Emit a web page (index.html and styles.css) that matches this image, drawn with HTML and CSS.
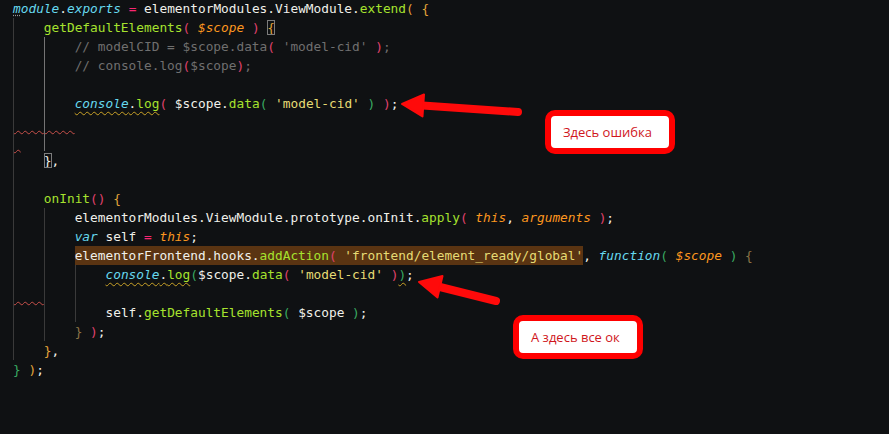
FILE: index.html
```html
<!DOCTYPE html>
<html lang="ru">

<head>
  <meta charset="UTF-8" />
  <title>elementor view module</title>
  <link rel="stylesheet" href="styles.css">
</head>

<body>

  <!-- редактор -->
  <div class="editor">
    <div class="ln"><span class="k"><span class="dots">m</span>odule</span>.<span class="k">exports</span> <span class="o">=</span> elementorModules.ViewModule.<span class="f">extend</span><span class="b1">(</span> <span class="b1">{</span></div>
    <div class="ln"><span class="ind">    </span><span class="f">getDefaultElements</span><span class="b2">(</span> <span class="p">$scope</span> <span class="b2">)</span> <span class="b1 match">{</span></div>
    <div class="ln"><span class="ind">    </span><span class="ind active">    </span><span class="c">// modelCID = $scope.data<span class="b2">(</span> 'model-cid' <span class="b2">)</span>;</span></div>
    <div class="ln"><span class="ind">    </span><span class="ind active">    </span><span class="c">// console.log<span class="b2">(</span>$scope<span class="b2">)</span>;</span></div>
    <div class="ln"><span class="ind">    </span><span class="ind active">    </span></div>
    <div class="ln"><span class="ind">    </span><span class="ind active">    </span><span class="warn"><span class="k">console</span>.<span class="f">log</span></span><span class="b2">(</span> $scope.<span class="f">data</span><span class="b3">(</span> <span class="s">'model-cid'</span> <span class="b3">)</span> <span class="b2">)</span>;</div>
    <div class="ln"><span class="ind err">    </span><span class="ind active err">    </span></div>
    <div class="ln"><span class="ind"><span class="err"> </span>   </span><span class="ind active">    </span></div>
    <div class="ln"><span class="ind">    </span><span class="match">}</span>,</div>
    <div class="ln"><span class="ind">    </span></div>
    <div class="ln"><span class="ind">    </span><span class="f">onInit</span><span class="b2">()</span> <span class="b1">{</span></div>
    <div class="ln"><span class="ind">    </span><span class="ind">    </span>elementorModules.ViewModule.prototype.onInit.<span class="f">apply</span><span class="b2">(</span> <span class="p">this</span>, <span class="p">arguments</span> <span class="b2">)</span>;</div>
    <div class="ln"><span class="ind">    </span><span class="ind">    </span><span class="k">var</span> self <span class="o">=</span> <span class="p">this</span>;</div>
    <div class="ln"><span class="ind">    </span><span class="ind">    </span><span class="hl">elementorFrontend.hooks.<span class="f">addAction</span><span class="b2">(</span> <span class="s">'frontend/element_ready/global'</span></span>, <span class="k">function</span><span class="b3">(</span> <span class="p">$scope</span> <span class="b3">)</span> <span class="b4">{</span></div>
    <div class="ln"><span class="ind">    </span><span class="ind">    </span><span class="ind">    </span><span class="warn"><span class="k">console</span>.<span class="f">log</span></span><span class="b3">(</span>$scope.<span class="f">data</span><span class="b2">(</span> <span class="s">'model-cid'</span> <span class="b2">)</span><span class="b3 warn">)</span>;</div>
    <div class="ln"><span class="ind err">    </span><span class="ind">    </span><span class="ind">    </span></div>
    <div class="ln"><span class="ind">    </span><span class="ind">    </span><span class="ind">    </span>self.<span class="f">getDefaultElements</span><span class="b3">(</span> $scope <span class="b3">)</span>;</div>
    <div class="ln"><span class="ind">    </span><span class="ind">    </span><span class="b4">}</span> <span class="b2">)</span>;</div>
    <div class="ln"><span class="ind">    </span><span class="b1">}</span>,</div>
    <div class="ln"><span class="b3">}</span> <span class="b1">)</span>;</div>
  </div>

  <!-- стрелки поверх кода -->
  <svg class="arrows" width="889" height="434" viewBox="0 0 889 434">
    <line x1="419" y1="105.3" x2="518" y2="112" stroke="#ff0a0a" stroke-width="8" stroke-linecap="round" />
    <polygon points="402,104 424,94.5 422.5,116.5" fill="#ff0a0a" stroke="#ff0a0a" stroke-width="2" stroke-linejoin="round" />
    <line x1="436" y1="286" x2="496" y2="301" stroke="#ff0a0a" stroke-width="8" stroke-linecap="round" />
    <polygon points="419,282 442.5,276 437.5,297.5" fill="#ff0a0a" stroke="#ff0a0a" stroke-width="2" stroke-linejoin="round" />
  </svg>

  <div class="note note-error">Здесь ошибка</div>
  <div class="note note-ok">А здесь все ок</div>

</body>

</html>
```

FILE: styles.css
```css
body {
  margin: 0;
  width: 889px;
  height: 434px;
  background: #0f1113;
  position: relative;
  overflow: hidden;
}

.editor {
  padding: 0 0 0 13px;
  margin-top: -1px;
  font-family: 'DejaVu Sans Mono', monospace;
  font-size: 12.8px;
  color: #f0f0ea;
}

.ln {
  height: 19px;
  line-height: 19px;
  white-space: pre;
}

/* отступы и направляющие */
.ind {
  display: inline-block;
  height: 19px;
  vertical-align: top;
  background: linear-gradient(#3a3a3a, #3a3a3a) no-repeat left top / 1px 100%;
}

.ind.active {
  background-image: linear-gradient(#747474, #747474);
}

.err {
  text-decoration: underline wavy #c8504a;
  text-decoration-thickness: 1px;
  text-underline-offset: 3px;
}

.warn {
  text-decoration: underline wavy #c9a227;
  text-decoration-thickness: 1px;
  text-underline-offset: 3px;
}

.dots {
  text-decoration: underline dotted #9a9a9a;
  text-underline-offset: 2px;
}

.k {
  color: #66d9ef;
  font-style: italic;
}

.f {
  color: #a6e22e;
}

.o {
  color: #f92672;
}

.p {
  color: #fd971f;
  font-style: italic;
}

.s {
  color: #e6db74;
}

.c {
  color: #6f6f6f;
}

.b1 {
  color: #e3a43a;
}

.b2 {
  color: #e0426e;
}

.b3 {
  color: #3aaa62;
}

.b4 {
  color: #8c7446;
}

.match {
  outline: 1px solid #7c7c7c;
  outline-offset: -1px;
}

.hl {
  display: inline-block;
  height: 19px;
  vertical-align: top;
  background: #5a3412;
}

/* стрелки и подписи */
.arrows {
  position: absolute;
  top: 0;
  left: 0;
  pointer-events: none;
}

.note {
  position: absolute;
  box-sizing: border-box;
  width: 130px;
  height: 44px;
  padding-left: 12px;
  background: white;
  border: 6px solid #ff0000;
  border-radius: 10px;
  font-family: 'Open Sans', sans-serif;
  font-size: 13px;
  line-height: 32px;
  color: #d0161c;
}

.note-error {
  left: 545px;
  top: 110px;
}

.note-ok {
  left: 513px;
  top: 315px;
}
```
